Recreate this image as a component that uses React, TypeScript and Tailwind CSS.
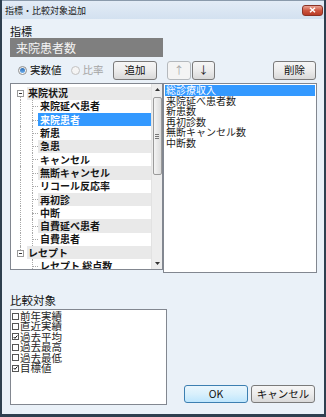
import React from "react";

const treeRows: { label: string; parent?: boolean; selected?: boolean }[] = [
  { label: "来院状況", parent: true },
  { label: "来院延べ患者" },
  { label: "来院患者", selected: true },
  { label: "新患" },
  { label: "急患" },
  { label: "キャンセル" },
  { label: "無断キャンセル" },
  { label: "リコール反応率" },
  { label: "再初診" },
  { label: "中断" },
  { label: "自費延べ患者" },
  { label: "自費患者" },
  { label: "レセプト", parent: true },
  { label: "レセプト 総点数" },
];

const rightRows = ["総診療収入", "来院延べ患者数", "新患数", "再初診数", "無断キャンセル数", "中断数"];

const compRows: { label: string; checked: boolean }[] = [
  { label: "前年実績", checked: false },
  { label: "直近実績", checked: false },
  { label: "過去平均", checked: true },
  { label: "過去最高", checked: false },
  { label: "過去最低", checked: false },
  { label: "目標値", checked: true },
];

function Btn({ children, className = "", disabled = false }: { children: React.ReactNode; className?: string; disabled?: boolean }) {
  return (
    <div
      className={
        "h-[19px] flex items-center justify-center rounded-[3px] border text-[10.5px] leading-none " +
        (disabled
          ? "border-[#b5b9bd] bg-[#f4f4f4] text-[#a8a8a8] "
          : "border-[#7a7a7a] bg-gradient-to-b from-[#f6f6f6] via-[#ececec] to-[#d9d9d9] text-[#111] ") +
        className
      }
    >
      {children}
    </div>
  );
}

function TreeRow({ row, index }: { row: (typeof treeRows)[number]; index: number }) {
  const gray = index % 2 === 0;
  const bg = row.selected ? "bg-[#3399ff] text-white" : gray ? "bg-[#e9e9e9] text-[#161616]" : "bg-white text-[#161616]";
  if (row.parent) {
    return (
      <div className="h-[13.3px] flex items-stretch">
        <div className="w-[16px] relative shrink-0">
          {index === 0 ? (
            <div className="absolute left-[9px] top-[9px] bottom-0 border-l border-dotted border-[#a8a8a8]" />
          ) : (
            <div className="absolute left-[9px] top-0 h-[4px] border-l border-dotted border-[#a8a8a8]" />
          )}
          <div className="absolute left-[6px] top-[3.5px] w-[7px] h-[7px] border border-[#9a9a9a] bg-white flex items-center justify-center">
            <div className="w-[3px] h-px bg-[#333]" />
          </div>
        </div>
        <div className={"flex-1 flex items-center pl-px font-bold text-[10px] leading-none whitespace-nowrap " + bg}>{row.label}</div>
      </div>
    );
  }
  return (
    <div className="h-[13.3px] flex items-stretch">
      <div className="w-[27px] relative shrink-0">
        {index < 12 && <div className="absolute left-[9px] top-0 bottom-0 border-l border-dotted border-[#a8a8a8]" />}
        <div className="absolute left-[21px] top-0 bottom-0 border-l border-dotted border-[#a8a8a8]" />
        <div className="absolute left-[21px] w-[6px] top-[6.5px] border-t border-dotted border-[#a8a8a8]" />
      </div>
      <div className={"flex-1 flex items-center pl-[2px] font-bold text-[10px] leading-none whitespace-nowrap " + bg}>{row.label}</div>
    </div>
  );
}

function Check({ checked }: { checked: boolean }) {
  return (
    <div className="w-[7px] h-[7px] border border-[#555] bg-white shrink-0 mr-px flex items-center justify-center">
      {checked && (
        <svg width="6" height="6" viewBox="0 0 6 6">
          <path d="M0.8 3 L2.3 4.6 L5.3 1.2" stroke="#111" strokeWidth="1.2" fill="none" />
        </svg>
      )}
    </div>
  );
}

export default function App() {
  return (
    <div className="w-[326px] h-[417px] flex flex-col bg-[#eaf1f8] border-l-2 border-r-2 border-b-[3px] border-[#2e3f4f] overflow-hidden font-['Noto_Sans_CJK_JP',sans-serif] text-black">
      {/* title bar */}
      <div className="h-[19px] shrink-0 flex items-center justify-between bg-gradient-to-b from-[#e3ecf6] to-[#d3e1f0] border-t border-[#8a9aab]">
        <span className="ml-[3px] text-[9px] leading-none text-[#1a1a1a]">指標・比較対象追加</span>
        <div className="mr-px w-[21px] h-[11px] rounded-[3px] border border-[#8a3326] bg-gradient-to-b from-[#e9a394] via-[#cd5640] to-[#b83a25] flex items-center justify-center">
          <svg width="7" height="6" viewBox="0 0 7 6">
            <path d="M1 0.8 L6 5.2 M6 0.8 L1 5.2" stroke="white" strokeWidth="1.5" />
          </svg>
        </div>
      </div>

      {/* body */}
      <div className="flex-1 flex flex-col pl-[8px] pr-[7px]">
        <div className="mt-[5px] h-[14px] text-[11px] leading-[14px] text-[#111]">指標</div>
        <div className="h-[19px] w-[153px] bg-[#7f7f7f] text-[#f4f4f4] text-[12px] leading-none pl-[6px] flex items-center">来院患者数</div>

        {/* radio/buttons row */}
        <div className="mt-[4px] h-[19px] flex items-center">
          <div className="w-[153px] flex items-center">
            <div className="ml-[8px] w-[9px] h-[9px] rounded-full border border-[#8e8f8f] bg-gradient-to-b from-[#e8e8e8] to-white flex items-center justify-center">
              <div className="w-[5px] h-[5px] rounded-full bg-gradient-to-b from-[#2b6cb3] to-[#6fb0ee]" />
            </div>
            <span className="ml-[3px] text-[10.5px] leading-none text-[#111]">実数値</span>
            <div className="ml-[9px] w-[9px] h-[9px] rounded-full border border-[#c2c2c2] bg-[#f4f4f4]" />
            <span className="ml-[3px] text-[10.5px] leading-none text-[#a5a5a5]">比率</span>
            <Btn className="ml-auto mr-[6px] w-[44px]">追加</Btn>
          </div>
          <Btn disabled className="ml-[4px] w-[24px]">↑</Btn>
          <Btn className="ml-px w-[23px]">↓</Btn>
          <Btn className="ml-auto w-[43px] mr-px">削除</Btn>
        </div>

        {/* tree + list */}
        <div className="mt-[3px] flex items-start">
          <div className="w-[153px] h-[187px] border border-[#828790] bg-white flex overflow-hidden">
            <div className="flex-1 pt-[2.5px] overflow-hidden">
              {treeRows.map((r, i) => (
                <TreeRow key={i} row={r} index={i} />
              ))}
            </div>
            <div className="w-[11px] shrink-0 bg-[#ededed] border-l border-[#e2e2e2] flex flex-col items-center">
              <div className="h-[11px] flex items-center justify-center">
                <svg width="5" height="3" viewBox="0 0 5 3"><path d="M0 3 L2.5 0 L5 3 Z" fill="#333" /></svg>
              </div>
              <div className="mt-[2px] w-[9px] h-[78px] rounded-[2px] border border-[#9a9a9a] bg-gradient-to-r from-[#f4f4f4] to-[#dcdcdc] flex flex-col items-center justify-center gap-px">
                <div className="w-[4px] h-px bg-[#777]" />
                <div className="w-[4px] h-px bg-[#777]" />
                <div className="w-[4px] h-px bg-[#777]" />
              </div>
              <div className="mt-auto h-[11px] flex items-center justify-center">
                <svg width="5" height="3" viewBox="0 0 5 3"><path d="M0 0 L2.5 3 L5 0 Z" fill="#333" /></svg>
              </div>
            </div>
          </div>
          <div className="w-[154px] h-[190px] border border-[#828790] bg-white pt-px px-px">
            {rightRows.map((t, i) => (
              <div
                key={i}
                className={
                  "h-[10.5px] flex items-center text-[10px] leading-none whitespace-nowrap pl-px " +
                  (i === 0 ? "bg-[#3399ff] text-white" : "text-[#1e1e1e]")
                }
              >
                {t}
              </div>
            ))}
          </div>
        </div>

        {/* lower section */}
        <div className="flex-1 flex pb-[9px]">
          <div className="w-[157px] flex flex-col">
            <div className="mt-[20px] h-[14px] text-[11.5px] leading-[14px] text-[#111]">比較対象</div>
            <div className="mt-[2px] h-[96px] border border-[#828790] bg-white pt-[1px] pl-px">
              {compRows.map((c, i) => (
                <div key={i} className="h-[10.4px] flex items-center text-[10.5px] leading-none text-[#1e1e1e] whitespace-nowrap">
                  <Check checked={c.checked} />
                  {c.label}
                </div>
              ))}
            </div>
          </div>
          <div className="flex-1 flex items-end justify-end pb-[2px] mr-[2px] gap-[3px]">
            <div className="w-[64px] h-[18px] rounded-[3px] border border-[#3c7fb1] bg-gradient-to-b from-[#eaf6fd] via-[#d9f0fc] to-[#bee6fd] flex items-center justify-center text-[10.5px] leading-none text-[#111]">
              OK
            </div>
            <div className="w-[64px] h-[18px] rounded-[3px] border border-[#7a7a7a] bg-gradient-to-b from-[#f6f6f6] via-[#ececec] to-[#d9d9d9] flex items-center justify-center text-[10.5px] leading-none text-[#111]">
              キャンセル
            </div>
          </div>
        </div>
      </div>
    </div>
  );
}
